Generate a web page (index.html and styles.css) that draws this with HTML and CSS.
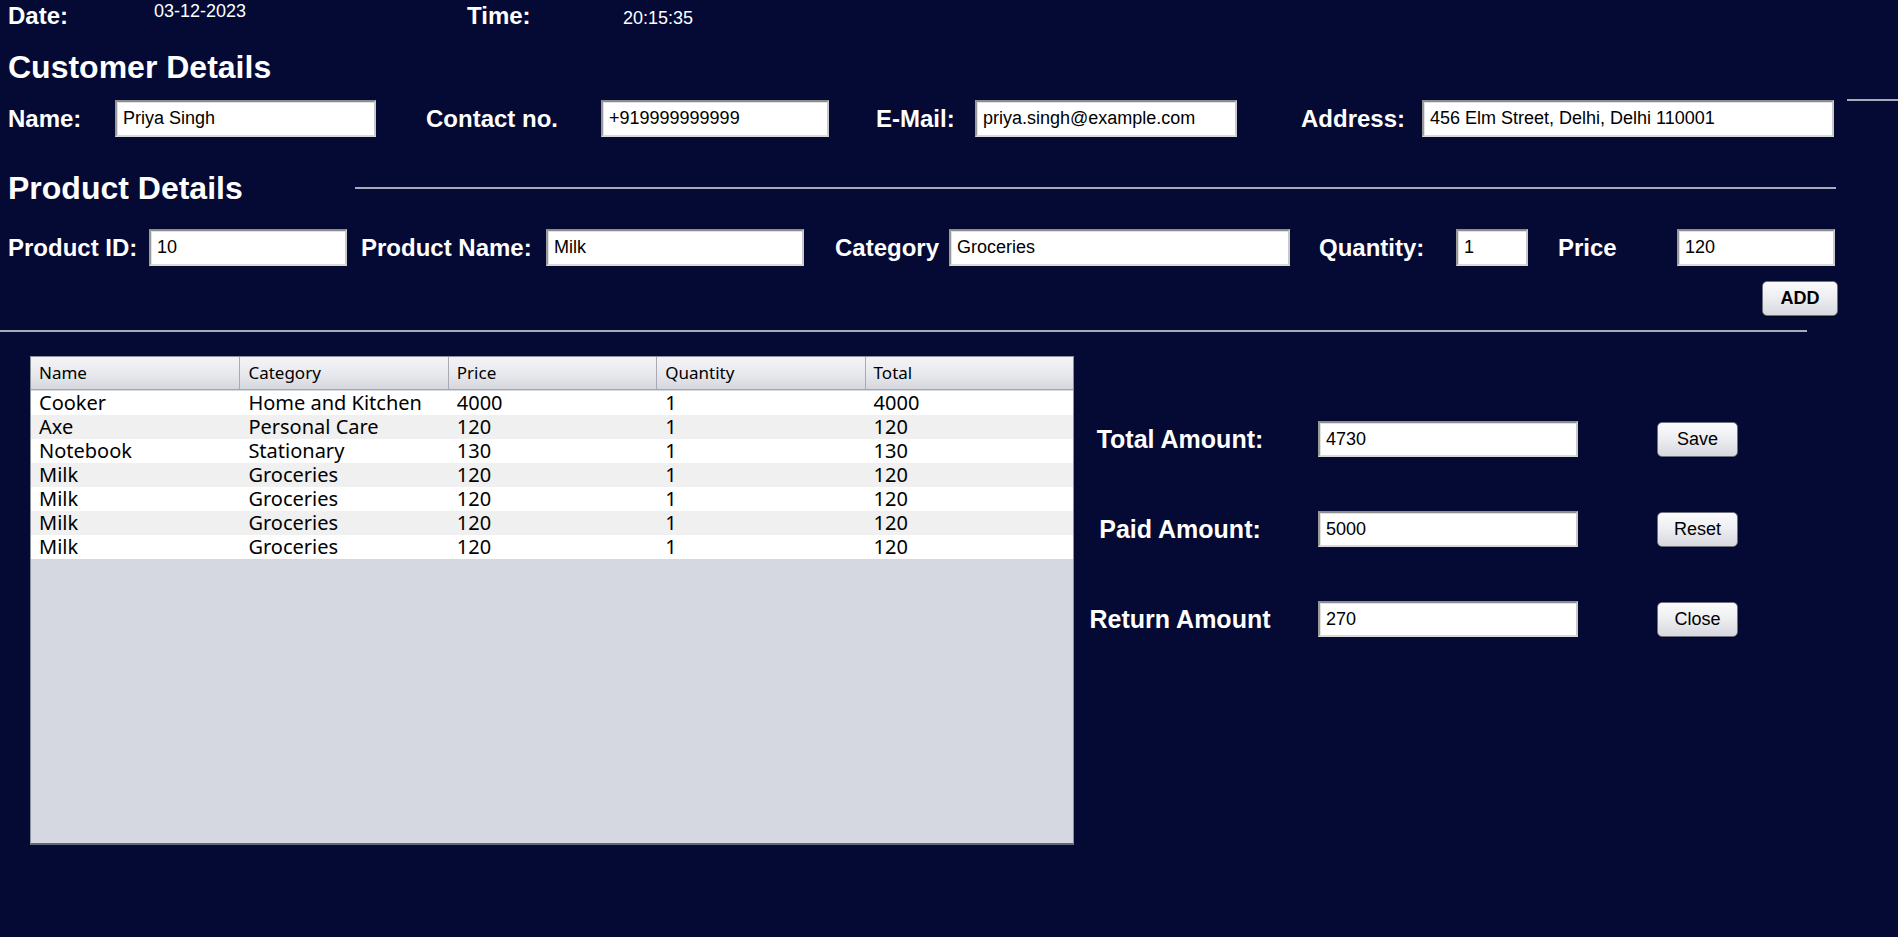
FILE: index.html
```html
<!DOCTYPE html>
<html lang="en">
<head>
<meta charset="utf-8">
<title>Billing</title>
<link rel="stylesheet" href="styles.css">
</head>
<body>
<div class="app">
  <div class="topbar">
    <span class="tb-label tb-date">Date:</span>
    <span class="tb-value tb-dateval">03-12-2023</span>
    <span class="tb-label tb-time">Time:</span>
    <span class="tb-value tb-timeval">20:15:35</span>
  </div>

  <h2 class="section-title cust-title">Customer Details</h2>
  <div class="field-row cust-row">
    <label class="lbl l-name">Name:</label>
    <input class="txt i-name" value="Priya Singh">
    <label class="lbl l-contact">Contact no.</label>
    <input class="txt i-contact" value="+919999999999">
    <label class="lbl l-email">E-Mail:</label>
    <input class="txt i-email" value="priya.singh@example.com">
    <label class="lbl l-address">Address:</label>
    <input class="txt i-address" value="456 Elm Street, Delhi, Delhi 110001">
    <span class="edge-line"></span>
  </div>

  <div class="section-head">
    <h2 class="section-title prod-title">Product Details</h2>
    <span class="head-line"></span>
  </div>
  <div class="field-row prod-row">
    <label class="lbl l-pid">Product ID:</label>
    <input class="txt i-pid" value="10">
    <label class="lbl l-pname">Product Name:</label>
    <input class="txt i-pname" value="Milk">
    <label class="lbl l-cat">Category</label>
    <input class="txt i-cat" value="Groceries">
    <label class="lbl l-qty">Quantity:</label>
    <input class="txt i-qty" value="1">
    <label class="lbl l-price">Price</label>
    <input class="txt i-price" value="120">
  </div>
  <div class="add-row">
    <button class="btn btn-add">ADD</button>
  </div>
  <div class="divider"></div>

  <div class="main">
    <div class="grid">
      <div class="grid-head">
        <div class="hc">Name</div>
        <div class="hc">Category</div>
        <div class="hc">Price</div>
        <div class="hc">Quantity</div>
        <div class="hc">Total</div>
      </div>
      <div class="grid-body">
        <div class="gr"><div class="gc">Cooker</div><div class="gc">Home and Kitchen</div><div class="gc">4000</div><div class="gc">1</div><div class="gc">4000</div></div>
        <div class="gr alt"><div class="gc">Axe</div><div class="gc">Personal Care</div><div class="gc">120</div><div class="gc">1</div><div class="gc">120</div></div>
        <div class="gr"><div class="gc">Notebook</div><div class="gc">Stationary</div><div class="gc">130</div><div class="gc">1</div><div class="gc">130</div></div>
        <div class="gr alt"><div class="gc">Milk</div><div class="gc">Groceries</div><div class="gc">120</div><div class="gc">1</div><div class="gc">120</div></div>
        <div class="gr"><div class="gc">Milk</div><div class="gc">Groceries</div><div class="gc">120</div><div class="gc">1</div><div class="gc">120</div></div>
        <div class="gr alt"><div class="gc">Milk</div><div class="gc">Groceries</div><div class="gc">120</div><div class="gc">1</div><div class="gc">120</div></div>
        <div class="gr"><div class="gc">Milk</div><div class="gc">Groceries</div><div class="gc">120</div><div class="gc">1</div><div class="gc">120</div></div>
      </div>
    </div>

    <div class="summary">
      <div class="sum-row">
        <label class="sum-label">Total Amount:</label>
        <input class="txt sum-input" value="4730">
        <button class="btn sum-btn">Save</button>
      </div>
      <div class="sum-row">
        <label class="sum-label">Paid Amount:</label>
        <input class="txt sum-input" value="5000">
        <button class="btn sum-btn">Reset</button>
      </div>
      <div class="sum-row">
        <label class="sum-label">Return Amount</label>
        <input class="txt sum-input" value="270">
        <button class="btn sum-btn">Close</button>
      </div>
    </div>
  </div>
</div>
</body>
</html>
```

FILE: styles.css
```css
* { box-sizing: border-box; }

html, body {
  margin: 0;
  padding: 0;
  background: #040a33;
}

body {
  width: 1898px;
  height: 937px;
  overflow: hidden;
  font-family: "Liberation Sans", Arial, sans-serif;
  color: #ffffff;
}

.app {
  display: flex;
  flex-direction: column;
}

/* top bar */
.topbar {
  display: flex;
  align-items: flex-start;
  height: 32px;
  padding-left: 8px;
}
.tb-label {
  font-size: 24px;
  font-weight: bold;
  line-height: 28px;
  padding-top: 2px;
}
.tb-date { width: 146px; }
.tb-time { width: 156px; }
.tb-value {
  font-size: 18px;
  line-height: 20px;
}
.tb-dateval { width: 313px; padding-top: 1px; }
.tb-timeval { padding-top: 8px; }

/* section titles */
.section-title {
  margin: 0;
  font-size: 32px;
  font-weight: bold;
  line-height: 40px;
  padding-left: 8px;
  white-space: nowrap;
}
.cust-title { margin-top: 15px; }

.section-head {
  display: flex;
  align-items: center;
  margin-top: 31px;
}
.prod-title { width: 355px; flex: none; }
.head-line {
  width: 1481px;
  height: 2px;
  background: #a9abb8;
}

/* field rows */
.field-row {
  display: flex;
  align-items: center;
  height: 37px;
  padding-left: 8px;
}
.cust-row { margin-top: 13px; }
.prod-row { margin-top: 21px; }

.lbl {
  font-size: 24px;
  font-weight: bold;
  white-space: nowrap;
  flex: none;
}

.txt {
  flex: none;
  height: 37px;
  padding: 0 6px;
  font-family: "Liberation Sans", Arial, sans-serif;
  font-size: 18px;
  color: #000;
  background: #fff;
  border: 2px solid;
  border-color: #8d8d8d #c9c9c9 #d9d9d9 #9a9a9a;
  box-shadow: inset 1px 1px 0 #e1e1e1;
  outline: none;
}

/* customer */
.l-name { width: 107px; }
.i-name { width: 261px; }
.l-contact { margin-left: 50px; width: 175px; }
.i-contact { width: 228px; }
.l-email { margin-left: 47px; width: 99px; }
.i-email { width: 262px; }
.l-address { margin-left: 64px; width: 121px; }
.i-address { width: 412px; }
.edge-line {
  align-self: flex-start;
  margin-top: -1px;
  margin-left: 13px;
  width: 51px;
  height: 2px;
  background: #a9abb8;
}

/* product */
.l-pid { width: 141px; }
.i-pid { width: 198px; }
.l-pname { margin-left: 14px; width: 185px; }
.i-pname { width: 258px; }
.l-cat { margin-left: 31px; width: 114px; }
.i-cat { width: 341px; }
.l-qty { margin-left: 29px; width: 137px; }
.i-qty { width: 72px; }
.l-price { margin-left: 30px; width: 119px; }
.i-price { width: 158px; }

/* buttons */
.btn {
  font-family: "Liberation Sans", Arial, sans-serif;
  font-size: 18px;
  color: #000;
  background: linear-gradient(#fbfbfc 0%, #eeeff2 45%, #d7d8de 100%);
  border: 1px solid #6f7180;
  border-radius: 5px;
  box-shadow: 0 1px 1px rgba(0, 0, 0, 0.5);
  padding: 0;
  cursor: pointer;
}

.add-row {
  display: flex;
  justify-content: flex-end;
  padding-right: 60px;
  margin-top: 15px;
}
.btn-add {
  width: 76px;
  height: 35px;
  font-weight: bold;
}

.divider {
  margin-top: 14px;
  width: 1807px;
  height: 2px;
  background: #a9abb8;
}

/* main */
.main {
  display: flex;
  margin-top: 24px;
  padding-left: 30px;
}

.grid {
  flex: none;
  width: 1044px;
  height: 489px;
  background: #d5d8e1;
  border: 1px solid #8c8f9c;
  border-bottom: 2px solid #62667a;
  display: flex;
  flex-direction: column;
}
.grid-head {
  display: grid;
  grid-template-columns: repeat(5, 1fr);
  height: 33px;
  background: linear-gradient(#f4f4f6 0%, #e9eaee 50%, #d6d7dd 100%);
  border-bottom: 1px solid #a3a6b2;
}
.hc {
  font-family: "Noto Sans", "Liberation Sans", sans-serif;
  font-size: 17px;
  line-height: 31px;
  color: #000;
  padding-left: 8px;
  border-left: 1px solid #a8abb6;
}
.hc:first-child { border-left: none; }

.grid-body { padding-top: 1px; }
.gr {
  display: grid;
  grid-template-columns: repeat(5, 1fr);
  height: 24px;
  background: #ffffff;
}
.gr.alt { background: #f0f0f0; }
.gc {
  font-family: "Noto Sans", "Liberation Sans", sans-serif;
  font-size: 20px;
  line-height: 24px;
  color: #000;
  padding-left: 8px;
  white-space: nowrap;
}
.gc + .gc { padding-left: 9px; }

/* summary */
.summary {
  display: flex;
  flex-direction: column;
  gap: 54px;
  padding-top: 65px;
  margin-left: 11px;
}
.sum-row {
  display: flex;
  align-items: center;
  height: 36px;
}
.sum-label {
  width: 190px;
  text-align: center;
  font-size: 25px;
  font-weight: bold;
  white-space: nowrap;
}
.sum-input {
  margin-left: 43px;
  width: 260px;
  height: 36px;
}
.sum-btn {
  margin-left: 79px;
  width: 81px;
  height: 35px;
}
```
